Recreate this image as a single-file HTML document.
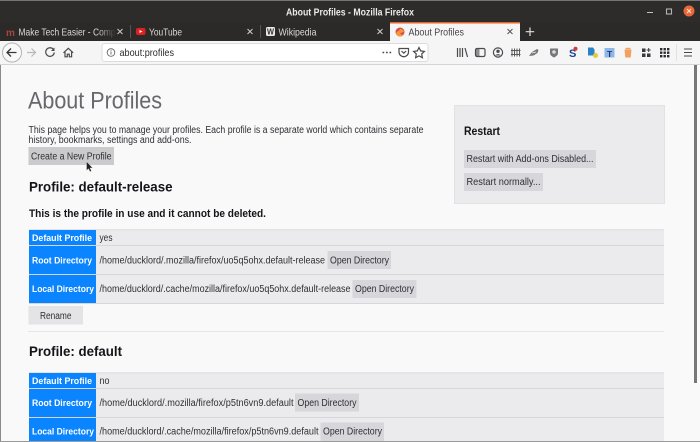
<!DOCTYPE html>
<html><head><meta charset="utf-8"><title>About Profiles</title>
<style>
html,body{margin:0;padding:0;width:700px;height:442px;overflow:hidden;background:#f9f9fa}
svg{display:block;filter:blur(.3px)}
text{font-family:"Liberation Sans","DejaVu Sans",sans-serif;white-space:pre}
.b{font-size:10px;fill:#2f2f33}
.h{font-weight:bold;fill:#141418}
.th{font-size:9.5px;font-weight:bold;fill:#fff}
.tb{font-size:10.500px;fill:#dcdad6}
.i{fill:none;stroke:#4a4a4f;stroke-width:1.200}
</style></head><body>
<svg width="700" height="442" viewBox="0 0 700 442" xmlns="http://www.w3.org/2000/svg">
<defs><linearGradient id="fade" x1="0" x2="1"><stop offset="0" stop-color="#2b2a28" stop-opacity="0"/><stop offset="1" stop-color="#2b2a28"/></linearGradient></defs>
<!-- chrome -->
<rect width="700" height="442" fill="#f9f9fa"/>
<rect width="700" height="22" fill="#2e2c2a"/>
<rect width="700" height="1" fill="#77756f"/>
<rect y="22" width="700" height="19" fill="#2b2a28"/>
<text x="286" y="15.500" font-size="10.500" font-weight="bold" fill="#eceae5" textLength="128" lengthAdjust="spacingAndGlyphs">About Profiles - Mozilla Firefox</text>
<rect x="647" y="12" width="6" height="1" fill="#c4c2bd"/>
<rect x="666.500" y="9" width="5" height="5" fill="none" stroke="#b5b3ae" stroke-width="1.100"/>
<circle cx="689" cy="11" r="5.500" fill="#e9683a"/>
<path d="M687 9l4 4M691 9l-4 4" stroke="#fbe3d8" stroke-width="1"/>
<!-- tabs -->
<text x="6" y="36" font-size="10" font-weight="bold" fill="#a9453d">m</text>
<text class="tb" x="18.500" y="35.500" textLength="97" lengthAdjust="spacingAndGlyphs">Make Tech Easier - Comp</text>
<rect x="98" y="24" width="18" height="16" fill="url(#fade)"/>
<path d="M117.500 29l5 5M122.500 29l-5 5" stroke="#cfcdc9" stroke-width="1"/>
<rect x="130" y="25" width="1" height="13" fill="#55534f"/>
<rect x="136" y="28" width="9.500" height="7" rx="2" fill="#e02020"/><path d="M139.500 30v3l3-1.500z" fill="#fff"/>
<text class="tb" x="149" y="35.500" textLength="33" lengthAdjust="spacingAndGlyphs">YouTube</text>
<path d="M247.500 29l5 5M252.500 29l-5 5" stroke="#cfcdc9" stroke-width="1"/>
<rect x="260" y="25" width="1" height="13" fill="#55534f"/>
<rect x="266" y="27" width="9" height="9" rx="1.500" fill="#e8e8e6"/>
<text x="267" y="34.500" font-size="8" font-weight="bold" fill="#333" textLength="7" lengthAdjust="spacingAndGlyphs">W</text>
<text class="tb" x="278.500" y="35.500" textLength="38" lengthAdjust="spacingAndGlyphs">Wikipedia</text>
<path d="M377.500 29l5 5M382.500 29l-5 5" stroke="#cfcdc9" stroke-width="1"/>
<rect x="390" y="23" width="130" height="19" fill="#f5f5f5"/>
<rect x="390" y="22" width="130" height="1.500" fill="#e2672e"/>
<circle cx="400" cy="32" r="4.500" fill="#d84a5a"/><path d="M396 33a4.500 4.500 0 0 0 8 1.500c-1 .5-3 .5-4-1 1-1 3-1 4-2-1-2-3-3-4.500-2.500 1 1-.5 2-1.500 2z" fill="#f59a2e"/>
<text x="408.500" y="35.500" font-size="10.500" fill="#45454a" textLength="55.500" lengthAdjust="spacingAndGlyphs">About Profiles</text>
<path d="M507.500 29l5 5M512.500 29l-5 5" stroke="#55555a" stroke-width="1"/>
<path d="M530 27.500v8.500M525.700 31.700h8.500" stroke="#e0dfdb" stroke-width="1.200"/>
<!-- toolbar -->
<rect y="41" width="700" height="23" fill="#f5f5f5"/>
<rect y="64" width="700" height="1" fill="#d4d4d4"/>
<circle cx="12" cy="52.500" r="9.500" fill="#f9f9f9" stroke="#b4b4b6"/>
<path d="M16.500 52.500h-9M11 48.500l-4 4 4 4" fill="none" stroke="#38383d" stroke-width="1.300"/>
<path d="M35.500 52.500h-8.500M31.500 48.500l4 4-4 4" fill="none" stroke="#b8b8ba" stroke-width="1.200"/>
<path d="M53.500 49.500a4.300 4.300 0 1 0 .8 3" class="i"/><path d="M54.500 47.500v3.500h-3.500z" fill="#4a4a4f"/>
<path d="M63.500 52.800l4.800-4.500 4.800 4.500M65 52v4.800h2.300v-2.600h2v2.600h2.300V52" class="i"/>
<rect x="102" y="43.500" width="326" height="18" rx="2.500" fill="#fff" stroke="#dcdcdc"/>
<circle cx="111" cy="52.500" r="3.800" fill="none" stroke="#66666b" stroke-width=".9"/><path d="M111 51.500v3M111 49.800v1" stroke="#66666b" stroke-width=".9"/>
<text x="119.500" y="56" font-size="10.500" fill="#2a2a2e" textLength="54.500" lengthAdjust="spacingAndGlyphs">about:profiles</text>
<path d="M382.500 52.500h1.700M386 52.500h1.700M389.500 52.500h1.700" stroke="#4a4a4f" stroke-width="1.500"/>
<path d="M399 48.500h9.500v3.500a4.700 4.700 0 0 1-9.500 0z" class="i"/><path d="M401.500 51l2.300 2.200 2.300-2.200" class="i"/>
<path d="M419 47.500l1.700 3.400 3.700.5-2.700 2.600.7 3.700-3.400-1.800-3.400 1.800.7-3.700-2.700-2.600 3.700-.5z" class="i"/>
<path d="M457.500 48v9M460 48v9M462.500 48v9M465 48l2.500 9" class="i"/>
<rect x="475.500" y="48.500" width="9.500" height="8" rx="1.500" class="i"/><rect x="476" y="49" width="3.500" height="7" fill="#4a4a4f" opacity=".6"/>
<circle cx="498" cy="52.500" r="4.600" class="i"/><circle cx="498" cy="51.300" r="1.700" fill="#4a4a4f"/><path d="M495.300 55.500c1-1.800 4.400-1.800 5.400 0" fill="#4a4a4f"/>
<path d="M512 48.500v8M514.500 48.500v8M517 48.500v8M519.500 48.500v8M511 50.500h9.500M511 54.500h9.500" fill="none" stroke="#5a5a5f" stroke-width="1"/>
<path d="M529 56l3-4 5-3 1.500 1-1 3-4 2.500z" fill="#77777b"/><path d="M532 53l4-1" stroke="#f5f5f5" stroke-width=".7"/>
<path d="M550 48.500h8v4.500c0 2.500-2.500 3.800-4 4.500-1.500-.7-4-2-4-4.500z" fill="#77777b"/><circle cx="554" cy="52" r="1.800" fill="#ddd"/>
<text x="569" y="57" font-size="11" font-weight="bold" fill="#1c3f94">S</text><circle cx="575.500" cy="48.800" r="2" fill="#d83a3a"/>
<path d="M588 47.500h5l1.500 2v6h-6.500z" fill="#2a83c6"/><circle cx="595.500" cy="55.500" r="2.500" fill="#e5c93a"/>
<rect x="604.500" y="48" width="10" height="9.500" fill="#8fb6e8"/><text x="607" y="57" font-size="8.500" font-weight="bold" fill="#1d3b6e">T</text>
<path d="M624.500 49.500h7l-.8 8h-5.400z" fill="#f0a060"/><rect x="625.500" y="47.800" width="5" height="1.400" fill="#f0a060"/>
<rect x="642" y="48.500" width="3.500" height="3.500" fill="#38383d"/><rect x="642" y="53.500" width="3.500" height="3.500" fill="#38383d"/><rect x="647" y="53.500" width="3.500" height="3.500" fill="#38383d"/><path d="M648.700 48v4M646.700 50h4" stroke="#38383d"/>
<g fill="#2a2a2e"><rect x="660" y="48" width="2.400" height="2.400"/><rect x="663.500" y="48" width="2.400" height="2.400"/><rect x="667" y="48" width="2.400" height="2.400"/><rect x="660" y="51.500" width="2.400" height="2.400"/><rect x="663.500" y="51.500" width="2.400" height="2.400"/><rect x="667" y="51.500" width="2.400" height="2.400"/><rect x="660" y="55" width="2.400" height="2.400"/><rect x="663.500" y="55" width="2.400" height="2.400"/><rect x="667" y="55" width="2.400" height="2.400"/></g>
<rect x="676" y="44" width="1" height="17" fill="#e2e2e2"/>
<path d="M684 49h8M684 52.500h8M684 56h8" stroke="#4a4a4f" stroke-width="1"/>
<!-- window edges -->
<rect x="0" y="65" width="1" height="377" fill="#8a8a8a"/>
<rect x="0" y="441" width="700" height="1" fill="#9a9a9a"/>
<rect x="694" y="65" width="3" height="318" fill="#77777a"/>
<!-- main -->
<text x="28" y="108.500" font-size="24" fill="#68686c" textLength="134" lengthAdjust="spacingAndGlyphs">About Profiles</text>
<text class="b" x="28.500" y="133" textLength="395" lengthAdjust="spacingAndGlyphs">This page helps you to manage your profiles. Each profile is a separate world which contains separate</text>
<text class="b" x="28.500" y="143" textLength="163" lengthAdjust="spacingAndGlyphs">history, bookmarks, settings and add-ons.</text>
<rect x="28.500" y="147" width="85.500" height="18" fill="#cbcbcd"/>
<text class="b" x="31" y="159.500" textLength="80.500" lengthAdjust="spacingAndGlyphs">Create a New Profile</text>
<text class="h" x="29" y="191.500" font-size="14" textLength="143.500" lengthAdjust="spacingAndGlyphs">Profile: default-release</text>
<text class="h" x="29" y="217" font-size="11" textLength="237" lengthAdjust="spacingAndGlyphs">This is the profile in use and it cannot be deleted.</text>
<!-- table 1 -->
<rect x="29" y="229" width="635" height="75" fill="#ebebee"/>
<rect x="29" y="229.500" width="635" height=".8" fill="#dcdcdf"/>
<rect x="29" y="245" width="635" height="1" fill="#d7d7db"/>
<rect x="29" y="274" width="635" height="1" fill="#d7d7db"/>
<rect x="29" y="303" width="635" height="1" fill="#d7d7db"/>
<rect x="29" y="230" width="67" height="15" fill="#0a84ff"/>
<rect x="29" y="246" width="67" height="28" fill="#0a84ff"/>
<rect x="29" y="275" width="67" height="28" fill="#0a84ff"/>
<text class="th" x="32" y="241" textLength="60" lengthAdjust="spacingAndGlyphs">Default Profile</text>
<text class="th" x="32" y="263.500" textLength="60" lengthAdjust="spacingAndGlyphs">Root Directory</text>
<text class="th" x="32" y="292" textLength="62" lengthAdjust="spacingAndGlyphs">Local Directory</text>
<text class="b" x="99.500" y="241" textLength="13" lengthAdjust="spacingAndGlyphs">yes</text>
<text class="b" x="99.500" y="263.500" textLength="225.500" lengthAdjust="spacingAndGlyphs">/home/ducklord/.mozilla/firefox/uo5q5ohx.default-release</text>
<rect x="327.500" y="251" width="63.500" height="18" fill="#d7d7db"/>
<text class="b" x="330" y="263.500" textLength="59" lengthAdjust="spacingAndGlyphs">Open Directory</text>
<text class="b" x="99.500" y="292" textLength="251" lengthAdjust="spacingAndGlyphs">/home/ducklord/.cache/mozilla/firefox/uo5q5ohx.default-release</text>
<rect x="352.500" y="280" width="64" height="18" fill="#d7d7db"/>
<text class="b" x="355" y="292" textLength="59" lengthAdjust="spacingAndGlyphs">Open Directory</text>
<rect x="28.500" y="306" width="54.500" height="18.500" fill="#e4e4e6"/>
<text class="b" x="40" y="319" textLength="31.500" lengthAdjust="spacingAndGlyphs">Rename</text>
<rect x="28" y="331" width="636" height="1" fill="#e6e6e8"/>
<!-- table 2 -->
<text class="h" x="29" y="356" font-size="14" textLength="93" lengthAdjust="spacingAndGlyphs">Profile: default</text>
<rect x="29" y="372" width="635" height="69" fill="#ebebee"/>
<rect x="29" y="372.500" width="635" height=".8" fill="#dcdcdf"/>
<rect x="29" y="388" width="635" height="1" fill="#d7d7db"/>
<rect x="29" y="417" width="635" height="1" fill="#d7d7db"/>
<rect x="29" y="373" width="67" height="15" fill="#0a84ff"/>
<rect x="29" y="389" width="67" height="28" fill="#0a84ff"/>
<rect x="29" y="418" width="67" height="23" fill="#0a84ff"/>
<text class="th" x="32" y="384" textLength="60" lengthAdjust="spacingAndGlyphs">Default Profile</text>
<text class="th" x="32" y="406" textLength="60" lengthAdjust="spacingAndGlyphs">Root Directory</text>
<text class="th" x="32" y="434.500" textLength="62" lengthAdjust="spacingAndGlyphs">Local Directory</text>
<text class="b" x="99.500" y="384" textLength="10" lengthAdjust="spacingAndGlyphs">no</text>
<text class="b" x="99.500" y="406" textLength="194" lengthAdjust="spacingAndGlyphs">/home/ducklord/.mozilla/firefox/p5tn6vn9.default</text>
<rect x="295" y="393.500" width="64" height="18" fill="#d7d7db"/>
<text class="b" x="297.500" y="406" textLength="59" lengthAdjust="spacingAndGlyphs">Open Directory</text>
<text class="b" x="99.500" y="434.500" textLength="219" lengthAdjust="spacingAndGlyphs">/home/ducklord/.cache/mozilla/firefox/p5tn6vn9.default</text>
<rect x="320.500" y="422.500" width="63.500" height="18.500" fill="#d7d7db"/>
<text class="b" x="323" y="434.500" textLength="59" lengthAdjust="spacingAndGlyphs">Open Directory</text>
<!-- restart -->
<rect x="454.500" y="105.500" width="210" height="98" fill="#ebebee" stroke="#e2e2e5"/>
<text class="h" x="464" y="135" font-size="11.500" textLength="36" lengthAdjust="spacingAndGlyphs">Restart</text>
<rect x="464" y="150" width="132" height="18" fill="#d7d7db"/>
<text class="b" x="466.500" y="162" textLength="127" lengthAdjust="spacingAndGlyphs">Restart with Add-ons Disabled...</text>
<rect x="464" y="173" width="79" height="18" fill="#d7d7db"/>
<text class="b" x="466.500" y="185" textLength="74" lengthAdjust="spacingAndGlyphs">Restart normally...</text>
<!-- cursor -->
<path d="M86.500 161.500v9l2-1.800 1.500 3 1.500-.7-1.500-3h2.700z" fill="#222" stroke="#eee" stroke-width=".4"/>
</svg>
</body></html>
